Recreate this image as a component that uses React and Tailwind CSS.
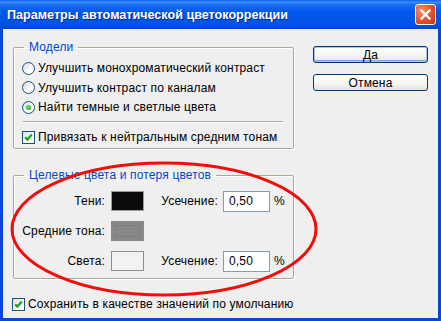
import React from "react";

function Radio({ checked }) {
  return (
    <div className="w-[13px] h-[13px] rounded-full border border-[#1C5180] bg-[linear-gradient(135deg,#D8D8D2,#FFFFFF_70%)] flex items-center justify-center shrink-0">
      {checked && (
        <div className="w-[5px] h-[5px] rounded-full bg-[radial-gradient(circle_at_40%_40%,#6BE86B,#1E961E)]" />
      )}
    </div>
  );
}

function Check() {
  return (
    <div className="w-[13px] h-[13px] border border-[#1C5180] bg-[linear-gradient(135deg,#DCDCD7,#FFFFFF_70%)] flex items-center justify-center shrink-0">
      <svg width="11" height="11" viewBox="0 0 11 11">
        <path d="M2.2 5.2 L4.4 7.6 L8.8 2.6" fill="none" stroke="#21A121" strokeWidth="2.2" />
      </svg>
    </div>
  );
}

function Button({ children, primary }) {
  return (
    <div
      className={
        "w-[115px] h-[17px] rounded-[3px] border border-[#003C74] bg-[linear-gradient(180deg,#FFFFFF,#F4F4F0_60%,#E3E2DA)] flex items-center justify-center leading-none " +
        (primary ? "shadow-[inset_0_0_0_1px_#A9C4EE,inset_0_-1px_0_1px_#7FA6E4]" : "")
      }
    >
      {children}
    </div>
  );
}

export default function App() {
  return (
    <div className="relative w-[441px] h-[321px] bg-[#0A44D8] flex flex-col overflow-hidden [font-family:'Liberation_Sans',Arial,sans-serif] text-[12px] tracking-[0.15px] text-black">
      <div className="h-[29px] shrink-0 flex items-center pl-[7px] pr-[4px] bg-[linear-gradient(180deg,#0A5CE6_0px,#3B8CFA_2px,#1B6AF0_5px,#0058EA_12px,#0054E4_24px,#0346CC_29px)]">
        <div className="flex-1 text-white font-bold text-[12.6px] tracking-normal [text-shadow:1px_1px_0_#0A2A8A] mt-[1px] whitespace-nowrap">
          Параметры автоматической цветокоррекции
        </div>
        <div className="w-[21px] h-[21px] rounded-[3px] border border-white bg-[radial-gradient(circle_at_30%_30%,#F5906F,#E34F28_55%,#C6361A)] flex items-center justify-center mr-[1px]">
          <svg width="13" height="13" viewBox="0 0 13 13">
            <path d="M2.5 2.5 L10.5 10.5 M10.5 2.5 L2.5 10.5" stroke="white" strokeWidth="2.3" strokeLinecap="square" />
          </svg>
        </div>
      </div>

      <div className="flex-1 mx-[3px] mb-[3px] bg-[#EFEFEF] flex flex-col">
        <div className="flex">
          <div className="ml-[10px] w-[281px] flex flex-col">
            <fieldset className="mt-[11px] border border-[#ACA899] rounded-[2px] shadow-[inset_1px_1px_0_#FFFFFF,1px_1px_0_#FFFFFF] pb-[1px]">
              <legend className="ml-[10px] px-[5px] leading-[14px] text-[#0046D5]">Модели</legend>
              <div className="flex flex-col pl-[8px]">
                <div className="mt-[4px] h-[20px] flex items-center gap-[3px]">
                  <Radio />
                  <span>Улучшить монохроматический контраст</span>
                </div>
                <div className="h-[19px] flex items-center gap-[3px]">
                  <Radio />
                  <span>Улучшить контраст по каналам</span>
                </div>
                <div className="h-[20px] flex items-center gap-[3px]">
                  <Radio checked />
                  <span>Найти темные и светлые цвета</span>
                </div>
                <div className="mt-[4px] ml-[1px] mr-[10px] h-[1px] bg-[#ACA899] shadow-[0_1px_0_#FFFFFF]" />
                <div className="mt-[5px] h-[20px] flex items-center gap-[3px]">
                  <Check />
                  <span>Привязать к нейтральным средним тонам</span>
                </div>
              </div>
            </fieldset>

            <fieldset className="mt-[19px] border border-[#ACA899] rounded-[2px] shadow-[inset_1px_1px_0_#FFFFFF,1px_1px_0_#FFFFFF] pb-[2px]">
              <legend className="ml-[10px] px-[5px] leading-[14px] text-[#0046D5]">Целевые цвета и потеря цветов</legend>
              <div className="flex flex-col pl-[8px] mt-[4px]">
                <div className="h-[30px] flex items-center">
                  <div className="w-[83px] text-right whitespace-nowrap">Тени:</div>
                  <div className="ml-[6px] w-[33px] h-[20px] bg-[#0B0B0B] border border-[#9A9A9A]" />
                  <div className="w-[74px] text-right whitespace-nowrap">Усечение:</div>
                  <div className="ml-[5px] w-[47px] h-[21px] bg-white border border-[#7F9DB9] flex items-center pl-[5px]">0,50</div>
                  <div className="ml-[4px]">%</div>
                </div>
                <div className="h-[30px] flex items-center">
                  <div className="w-[83px] text-right whitespace-nowrap">Средние тона:</div>
                  <div className="ml-[6px] w-[33px] h-[20px] bg-[#888888] border border-[#8A8A8A] p-[3px]">
                    <div className="w-full h-full border border-dotted border-[#3D7FD8]" />
                  </div>
                </div>
                <div className="h-[30px] flex items-center">
                  <div className="w-[83px] text-right whitespace-nowrap">Света:</div>
                  <div className="ml-[6px] w-[33px] h-[20px] bg-[#F2F2F2] border border-[#8E8E8E]" />
                  <div className="w-[74px] text-right whitespace-nowrap">Усечение:</div>
                  <div className="ml-[5px] w-[47px] h-[21px] bg-white border border-[#7F9DB9] flex items-center pl-[5px]">0,50</div>
                  <div className="ml-[4px]">%</div>
                </div>
              </div>
            </fieldset>
          </div>

          <div className="ml-[19px] mt-[17px] flex flex-col gap-[11px]">
            <Button primary>Да</Button>
            <Button>Отмена</Button>
          </div>
        </div>

        <div className="ml-[9px] mt-[15px] h-[20px] flex items-center gap-[3px]">
          <Check />
          <span>Сохранить в качестве значений по умолчанию</span>
        </div>
      </div>

      <svg className="absolute left-0 top-0 pointer-events-none" width="441" height="321" viewBox="0 0 441 321">
        <ellipse cx="164" cy="229" rx="152" ry="66" fill="none" stroke="#F20D0D" strokeWidth="3" />
      </svg>
    </div>
  );
}
